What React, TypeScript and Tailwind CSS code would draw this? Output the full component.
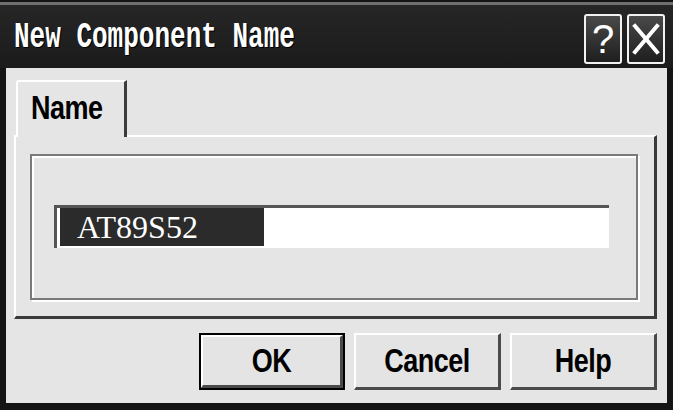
import { useState } from 'react';

function TitleButton({ children }: { children: React.ReactNode }) {
  return (
    <div className="w-[38px] h-[50px] rounded-[3px] border-2 border-[#f2f2f2] bg-gradient-to-b from-[#4a4a4a] to-[#1f1f1f] flex items-center justify-center">
      {children}
    </div>
  );
}

function DlgButton({ label, isDefault }: { label: string; isDefault?: boolean }) {
  const inner = (
    <div className="h-full w-full bg-[#e4e4e4] border-t-2 border-l-2 border-white border-b-[3px] border-r-[3px] border-b-[#4a4a4a] border-r-[#4a4a4a] flex items-center justify-center">
      <span className="inline-block scale-y-[1.2] text-[27px] font-bold text-black leading-none font-['Liberation_Sans',Arial,sans-serif] tracking-[-0.5px]">
        {label}
      </span>
    </div>
  );
  if (isDefault) {
    return <div className="w-[146px] h-[57px] border-2 border-black">{inner}</div>;
  }
  return <div className="w-[147px] h-[57px]">{inner}</div>;
}

export default function App() {
  const [name] = useState('AT89S52');

  return (
    <div className="w-[673px] h-[410px] bg-[#141414] flex flex-col overflow-hidden">
      {/* title bar */}
      <div className="h-[2px]" />
      <div className="h-[3px] bg-[#6e6e6e]" />
      <div className="h-[63px] bg-gradient-to-b from-[#262626] to-[#1b1b1b] flex items-center pl-[14px] pr-[8px]">
        <span className="inline-block scale-y-[1.4] text-[26px] font-bold text-white leading-none font-['Liberation_Mono','DejaVu_Sans_Mono',monospace] [text-shadow:1px_1px_0_#000]">
          New Component Name
        </span>
        <div className="ml-auto flex gap-[5px] pt-[4px]">
          <TitleButton>
            <span className="text-white text-[40px] leading-none font-['Liberation_Sans',Arial,sans-serif]">?</span>
          </TitleButton>
          <TitleButton>
            <svg width="28" height="32" viewBox="0 0 28 32">
              <path d="M3 3 L25 29 M25 3 L3 29" stroke="#ffffff" strokeWidth="4" strokeLinecap="square" />
            </svg>
          </TitleButton>
        </div>
      </div>

      {/* client area */}
      <div className="flex-1 mx-[6px] mb-[7px] bg-[#e5e5e5] flex flex-col pl-[8px] pr-[10px] pt-[12px]">
        {/* tab header */}
        <div className="flex h-[55px]">
          <div className="ml-[2px] w-[111px] h-[57px] bg-[#e5e5e5] border-t-2 border-l-2 border-white border-r-[3px] border-r-[#3c3c3c] rounded-tl-[3px] flex items-start pt-[13px] pl-[13px] relative z-10">
            <span className="inline-block scale-y-[1.2] text-[27px] font-bold text-black leading-none font-['Liberation_Sans',Arial,sans-serif] tracking-[-0.5px]">
              Name
            </span>
          </div>
        </div>

        {/* tab panel */}
        <div className="h-[184px] border-t-2 border-l-2 border-white border-r-[3px] border-b-[3px] border-r-[#3a3a3a] border-b-[#3a3a3a] pt-[17px] pl-[14px] pr-[16px]">
          {/* group box (etched) */}
          <div className="h-[146px] border-2 border-[#7a7a7a] shadow-[inset_2px_2px_0_#ffffff,2px_2px_0_#ffffff] pl-[22px] pr-[27px] pt-[49px]">
            {/* edit box */}
            <div className="h-[43px] bg-white border-t-[3px] border-l-[3px] border-t-[#555] border-l-[#555] flex items-stretch pb-[2px] pl-[1px]">
              <div className="w-[2px] bg-white" />
              <div className="w-[204px] bg-[#2b2b2b] flex items-center pl-[17px]">
                <span className="text-white text-[32px] leading-none font-['Liberation_Serif','Times_New_Roman',serif]">
                  {name}
                </span>
              </div>
            </div>
          </div>
        </div>

        {/* buttons */}
        <div className="flex justify-end gap-[9px] mt-[14px]">
          <DlgButton label="OK" isDefault />
          <DlgButton label="Cancel" />
          <DlgButton label="Help" />
        </div>
      </div>
    </div>
  );
}
